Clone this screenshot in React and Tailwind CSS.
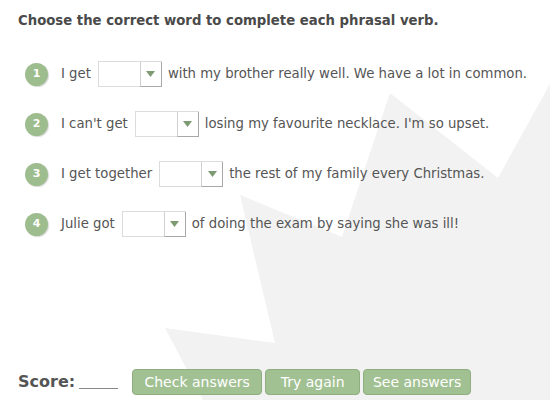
import React from "react";

const rows = [
  { n: 1, before: "I get", after: "with my brother really well. We have a lot in common." },
  { n: 2, before: "I can't get", after: "losing my favourite necklace. I'm so upset." },
  { n: 3, before: "I get together", after: "the rest of my family every Christmas." },
  { n: 4, before: "Julie got", after: "of doing the exam by saying she was ill!" },
];

function Select() {
  return (
    <div className="flex h-[26px] w-[64px] border border-[#dcdcdc] bg-white">
      <div className="flex-1" />
      <div className="flex w-[22px] items-center justify-center border-l border-l-[#d0d0d0] border-r border-r-[#a8a8a8] border-b border-b-[#a8a8a8] -mr-px -mb-px">
        <svg width="9" height="6" viewBox="0 0 9 6">
          <polygon points="0,0 9,0 4.5,6" fill="#7e9a72" />
        </svg>
      </div>
    </div>
  );
}

export default function App() {
  return (
    <div
      className="relative h-[400px] w-[550px] overflow-hidden bg-white text-[#555555]"
      style={{ fontFamily: '"DejaVu Sans", Verdana, sans-serif' }}
    >
      <svg className="absolute inset-0" width="550" height="400" viewBox="0 0 550 400">
        <polygon
          points="390,93 498,178 552,80 552,402 204,402 165,328 275,343 240,195 342,237"
          fill="#f2f2f2"
        />
      </svg>
      <div className="relative flex h-full flex-col px-[18px]">
        <h1 className="mt-[13px] text-[13.25px] font-bold leading-[16px] text-[#4a4a4a]">
          Choose the correct word to complete each phrasal verb.
        </h1>
        <div className="mt-[32px] flex flex-col gap-[24px] pl-[7px]">
          {rows.map((r) => (
            <div key={r.n} className="flex h-[26px] items-center text-[13.25px]">
              <div className="mr-[13px] flex h-[23px] w-[23px] items-center justify-center rounded-full bg-[#9dbd8e] text-[11px] font-bold text-white shadow-[1px_1px_1px_rgba(0,0,0,0.15)]">
                {r.n}
              </div>
              <span className="mr-[7px]">{r.before}</span>
              <Select />
              <span className="ml-[6px]">{r.after}</span>
            </div>
          ))}
        </div>
        <div className="mt-auto mb-[5px] flex items-center">
          <span className="text-[16px] font-bold text-[#555555]">Score:</span>
          <span className="ml-[4px] mt-[12px] block h-[1px] w-[39px] bg-[#888888]" />
          <div className="ml-[14px] flex gap-[3px]">
            <button className="h-[26px] w-[130px] rounded-[4px] border border-[#8fae80] bg-[#a2c193] text-[14px] text-white">
              Check answers
            </button>
            <button className="h-[26px] w-[95px] rounded-[4px] border border-[#8fae80] bg-[#a2c193] text-[14px] text-white">
              Try again
            </button>
            <button className="h-[26px] w-[108px] rounded-[4px] border border-[#8fae80] bg-[#a2c193] text-[14px] text-white">
              See answers
            </button>
          </div>
        </div>
      </div>
    </div>
  );
}
